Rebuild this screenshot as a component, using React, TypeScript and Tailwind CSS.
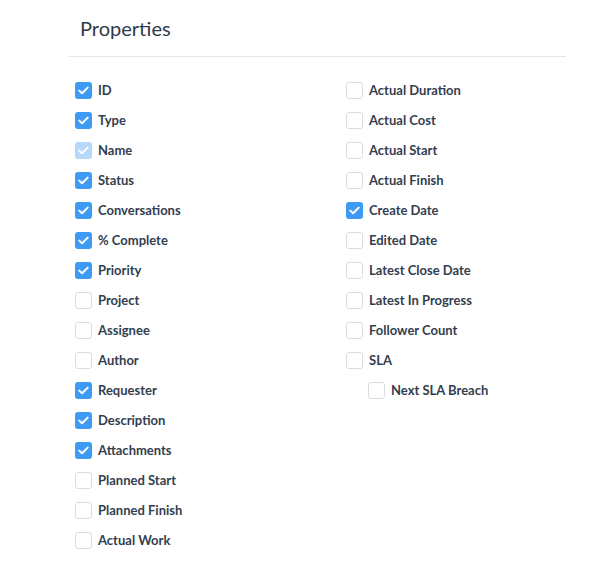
import React from "react";

type Item = { label: string; state: "on" | "off" | "dis"; indent?: boolean };

const left: Item[] = [
  { label: "ID", state: "on" },
  { label: "Type", state: "on" },
  { label: "Name", state: "dis" },
  { label: "Status", state: "on" },
  { label: "Conversations", state: "on" },
  { label: "% Complete", state: "on" },
  { label: "Priority", state: "on" },
  { label: "Project", state: "off" },
  { label: "Assignee", state: "off" },
  { label: "Author", state: "off" },
  { label: "Requester", state: "on" },
  { label: "Description", state: "on" },
  { label: "Attachments", state: "on" },
  { label: "Planned Start", state: "off" },
  { label: "Planned Finish", state: "off" },
  { label: "Actual Work", state: "off" },
];

const right: Item[] = [
  { label: "Actual Duration", state: "off" },
  { label: "Actual Cost", state: "off" },
  { label: "Actual Start", state: "off" },
  { label: "Actual Finish", state: "off" },
  { label: "Create Date", state: "on" },
  { label: "Edited Date", state: "off" },
  { label: "Latest Close Date", state: "off" },
  { label: "Latest In Progress", state: "off" },
  { label: "Follower Count", state: "off" },
  { label: "SLA", state: "off" },
  { label: "Next SLA Breach", state: "off", indent: true },
];

function Box({ state }: { state: Item["state"] }) {
  if (state === "off") {
    return <div className="w-[17px] h-[17px] rounded-[3px] border border-[#d9dde3] bg-white shrink-0" />;
  }
  return (
    <div
      className={
        "w-[17px] h-[17px] rounded-[3px] shrink-0 flex items-center justify-center " +
        (state === "on" ? "bg-[#3d9bf4]" : "bg-[#b5d8fb]")
      }
    >
      <svg width="11" height="9" viewBox="0 0 11 9" fill="none">
        <path d="M1.3 4.6 L4.1 7.3 L9.7 1.6" stroke="white" strokeWidth="2" strokeLinecap="round" strokeLinejoin="round" />
      </svg>
    </div>
  );
}

function Row({ item }: { item: Item }) {
  return (
    <div className={"h-[30px] flex items-center " + (item.indent ? "pl-[22px]" : "")}>
      <Box state={item.state} />
      <span className="ml-[6px] text-[13px] font-bold text-[#333e4f] leading-none">{item.label}</span>
    </div>
  );
}

export default function App() {
  return (
    <div className="w-[596px] h-[570px] bg-white" style={{ fontFamily: "Lato, 'Noto Sans', sans-serif" }}>
      <div className="ml-[69px] w-[497px]">
        <div className="pt-[14px] pb-[14px] pl-[11px] border-b border-[#e3e6ea]">
          <h1 className="text-[20px] leading-[28px] text-[#2f3a4a] font-normal">Properties</h1>
        </div>
        <div className="pt-[18px] pl-[6px] grid grid-cols-[271px_1fr]">
          <div className="flex flex-col">
            {left.map((i) => (
              <Row key={i.label} item={i} />
            ))}
          </div>
          <div className="flex flex-col">
            {right.map((i) => (
              <Row key={i.label} item={i} />
            ))}
          </div>
        </div>
      </div>
    </div>
  );
}
